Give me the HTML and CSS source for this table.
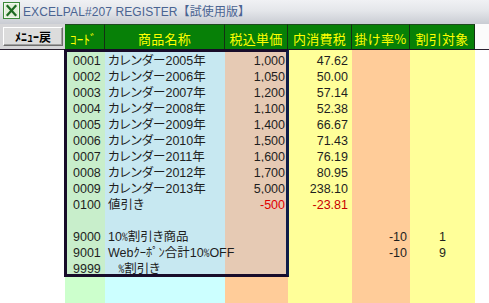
FILE: index.html
```html
<!DOCTYPE html>
<html lang="ja">
<head>
<meta charset="utf-8">
<title>EXCELPAL#207 REGISTER</title>
<link rel="stylesheet" href="styles.css">
</head>
<body>
<div class="window">
  <div class="titlebar">
    <svg class="app-icon" width="17" height="17" viewBox="0 0 17 17">
      <rect x="0.5" y="0.5" width="16" height="16" fill="#f4f8f0" stroke="#3d8a3a"/>
      <rect x="2" y="2" width="13" height="13" fill="#e3efd9"/>
      <path d="M4.5 4 L12.5 13 M12.5 4 L4.5 13" stroke="#1e6b22" stroke-width="2.2" stroke-linecap="square"/>
    </svg>
    <span class="title">EXCELPAL#207 REGISTER【試使用版】</span>
  </div>
  <div class="sheet">
    <div class="corner"><button class="menu-btn">ﾒﾆｭｰ戻</button></div>
    <div class="hd hd-left">ｺｰﾄﾞ</div>
    <div class="hd">商品名称</div>
    <div class="hd">税込単価</div>
    <div class="hd">内消費税</div>
    <div class="hd">掛け率%</div>
    <div class="hd">割引対象</div>
    <div class="hd-blank"></div>

    <div class="c blank"></div><div class="c code sel">0001</div><div class="c name sel">カレンダー2005年</div><div class="c price sel">1,000</div><div class="c tax">47.62</div><div class="c rate"></div><div class="c target"></div><div class="c blank"></div>
    <div class="c blank"></div><div class="c code sel">0002</div><div class="c name sel">カレンダー2006年</div><div class="c price sel">1,050</div><div class="c tax">50.00</div><div class="c rate"></div><div class="c target"></div><div class="c blank"></div>
    <div class="c blank"></div><div class="c code sel">0003</div><div class="c name sel">カレンダー2007年</div><div class="c price sel">1,200</div><div class="c tax">57.14</div><div class="c rate"></div><div class="c target"></div><div class="c blank"></div>
    <div class="c blank"></div><div class="c code sel">0004</div><div class="c name sel">カレンダー2008年</div><div class="c price sel">1,100</div><div class="c tax">52.38</div><div class="c rate"></div><div class="c target"></div><div class="c blank"></div>
    <div class="c blank"></div><div class="c code sel">0005</div><div class="c name sel">カレンダー2009年</div><div class="c price sel">1,400</div><div class="c tax">66.67</div><div class="c rate"></div><div class="c target"></div><div class="c blank"></div>
    <div class="c blank"></div><div class="c code sel">0006</div><div class="c name sel">カレンダー2010年</div><div class="c price sel">1,500</div><div class="c tax">71.43</div><div class="c rate"></div><div class="c target"></div><div class="c blank"></div>
    <div class="c blank"></div><div class="c code sel">0007</div><div class="c name sel">カレンダー2011年</div><div class="c price sel">1,600</div><div class="c tax">76.19</div><div class="c rate"></div><div class="c target"></div><div class="c blank"></div>
    <div class="c blank"></div><div class="c code sel">0008</div><div class="c name sel">カレンダー2012年</div><div class="c price sel">1,700</div><div class="c tax">80.95</div><div class="c rate"></div><div class="c target"></div><div class="c blank"></div>
    <div class="c blank"></div><div class="c code sel">0009</div><div class="c name sel">カレンダー2013年</div><div class="c price sel">5,000</div><div class="c tax">238.10</div><div class="c rate"></div><div class="c target"></div><div class="c blank"></div>
    <div class="c blank"></div><div class="c code sel">0100</div><div class="c name sel">値引き</div><div class="c price sel neg">-500</div><div class="c tax neg-dark">-23.81</div><div class="c rate"></div><div class="c target"></div><div class="c blank"></div>
    <div class="c blank"></div><div class="c code sel"></div><div class="c name sel"></div><div class="c price sel"></div><div class="c tax"></div><div class="c rate"></div><div class="c target"></div><div class="c blank"></div>
    <div class="c blank"></div><div class="c code sel">9000</div><div class="c name sel">10<span class="pct">%</span>割引き商品</div><div class="c price sel"></div><div class="c tax"></div><div class="c rate">-10</div><div class="c target">1</div><div class="c blank"></div>
    <div class="c blank"></div><div class="c code sel">9001</div><div class="c name sel over">Webｸｰﾎﾟﾝ合計10<span class="pct">%</span>OFF</div><div class="c price sel"></div><div class="c tax"></div><div class="c rate">-10</div><div class="c target">9</div><div class="c blank"></div>
    <div class="c blank"></div><div class="c code sel">9999</div><div class="c name sel">   <span class="pct">%</span>割引き</div><div class="c price sel"></div><div class="c tax"></div><div class="c rate"></div><div class="c target"></div><div class="c blank"></div>

    <div class="f blank"></div><div class="f code"></div><div class="f name"></div><div class="f price"></div><div class="f tax"></div><div class="f rate"></div><div class="f target"></div><div class="f blank"></div>

    <div class="selection"></div>
  </div>
</div>
</body>
</html>
```

FILE: styles.css
```css
* { box-sizing: border-box; }
html, body {
  margin: 0;
  padding: 0;
  width: 489px;
  height: 303px;
  overflow: hidden;
  background: #ffffff;
}
.window {
  width: 489px;
  height: 303px;
  display: flex;
  flex-direction: column;
}
.titlebar {
  height: 24px;
  flex: none;
  display: flex;
  align-items: center;
  gap: 3px;
  padding-left: 3px;
  padding-bottom: 3px;
  background: linear-gradient(to bottom, #f0f1f4 0%, #e4e6ea 45%, #c9ccd3 100%);
}
.app-icon { flex: none; display: block; }
.title {
  font-family: "Liberation Sans", "Noto Sans CJK JP", sans-serif;
  font-size: 12px;
  color: #4a6492;
  white-space: nowrap;
  letter-spacing: 0.1px;
}
.sheet {
  position: relative;
  flex: 1;
  display: grid;
  grid-template-columns: 65px 40px 120px 63px 64px 58px 65px 1fr;
  grid-template-rows: 26px repeat(14, 16px) 1fr;
  font-family: "Liberation Sans", "Noto Sans CJK JP", sans-serif;
  font-size: 12.5px;
  color: #1e1e1e;
}
.corner {
  background: #d6d6d8;
  border-bottom: 1px solid #2a2030;
  padding: 3px 2px 0 3px;
}
.menu-btn {
  display: block;
  width: 60px;
  height: 19px;
  padding: 0;
  margin: 0;
  font-family: "Noto Sans CJK JP", sans-serif;
  font-weight: bold;
  font-size: 12px;
  line-height: 15px;
  color: #000;
  background: #dcdcdc;
  border: 1px solid;
  border-color: #ffffff #6e6e6e #6e6e6e #ffffff;
  box-shadow: inset -1px -1px 0 #a0a0a0;
}
.hd {
  background: #078007;
  color: #ffff00;
  font-family: "Noto Sans CJK JP", sans-serif;
  border-top: 1px solid #1f4a1f;
  border-right: 1px solid #143014;
  border-bottom: 1px solid #1a1020;
  font-size: 13px;
  line-height: 16px;
  padding-top: 6px;
  text-align: center;
  white-space: nowrap;
  letter-spacing: 0.3px;
}
.hd-left { text-align: left; padding-left: 5px; }
.hd-blank {
  background: #fbfbfb;
  border-bottom: 1px solid #2a2030;
}
.c, .f {
  white-space: pre;
  line-height: 16px;
  padding-top: 3px;
  height: 16px;
}
.f { height: auto; }
.name { font-feature-settings: "palt" 1; }
.pct {
  font-family: "Noto Sans CJK JP", sans-serif;
  font-feature-settings: "hwid" 1;
  font-size: 11.5px;
  line-height: 0;
}
.blank { background: #ffffff; }
.code { background: #ccffcc; padding-left: 8px; }
.name { background: #ccffff; padding-left: 3px; }
.price { background: #ffcc99; text-align: right; padding-right: 3px; }
.tax { background: #ffff99; text-align: right; padding-right: 4px; }
.rate { background: #ffcc99; text-align: right; padding-right: 3px; }
.target { background: #ffff99; text-align: center; }
.code.sel { background: #c8eecb; }
.name.sel { background: #c7e8f1; }
.price.sel { background: #e6cab4; }
.over { z-index: 1; }
.neg { color: #e00000; }
.neg-dark { color: #c80000; }
.selection {
  position: absolute;
  left: 64px;
  top: 25px;
  width: 225px;
  height: 228px;
  border: 3px solid #180c2a;
  border-right-color: #0f1d48;
  z-index: 2;
  pointer-events: none;
}
```
